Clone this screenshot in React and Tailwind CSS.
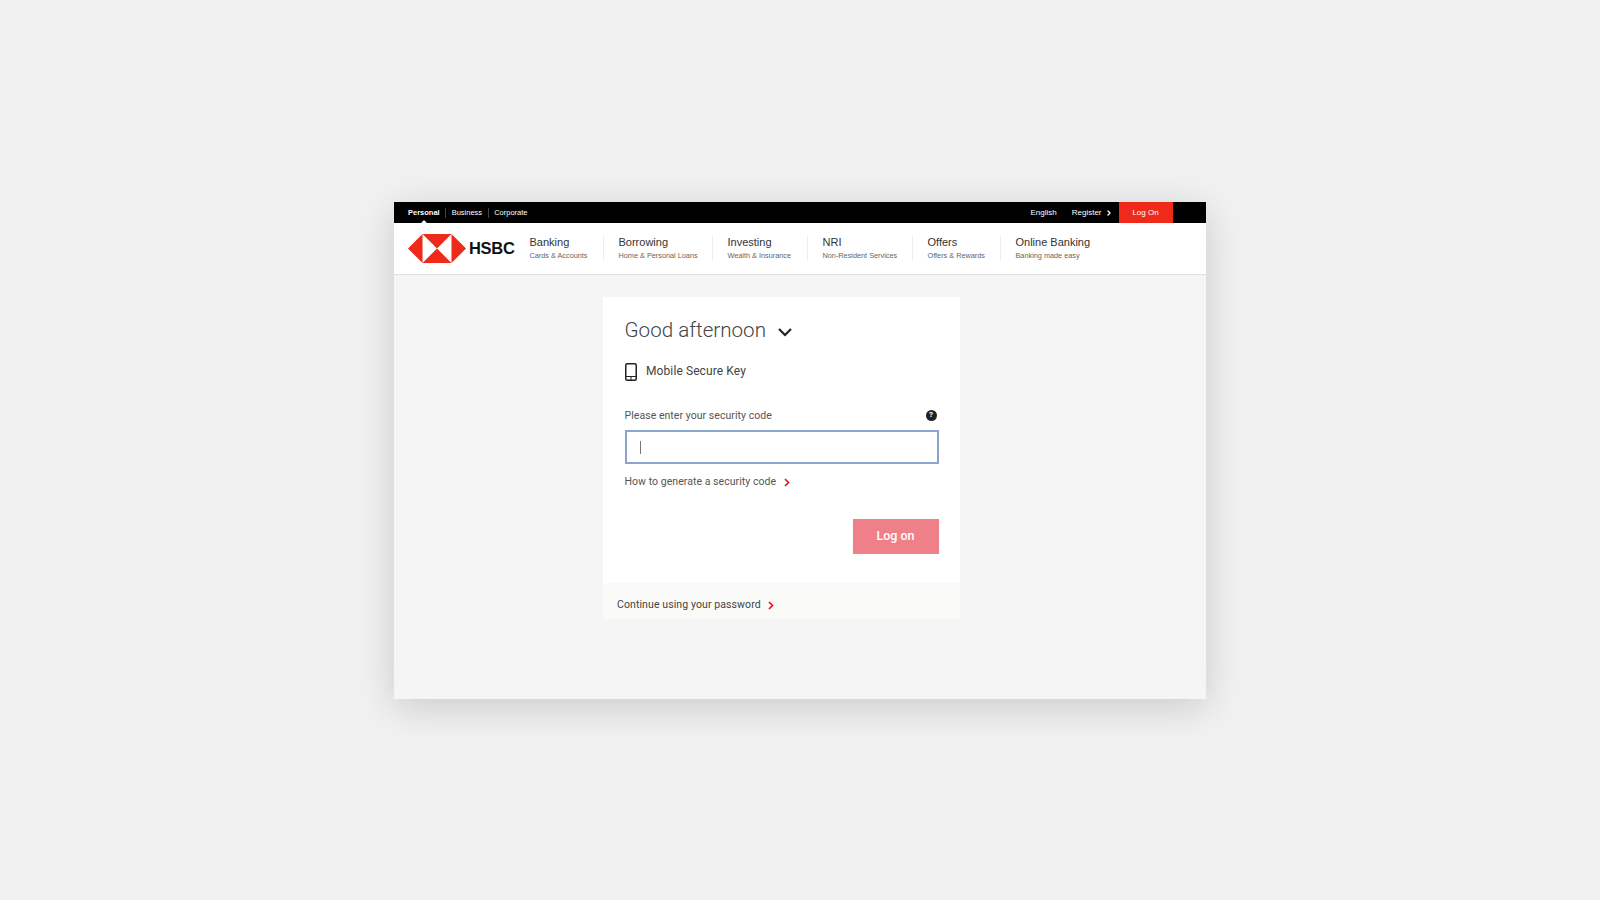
import React from "react";
import { ChevronRight } from "lucide-react";

const navItems = [
  { title: "Banking", sub: "Cards & Accounts", width: "w-[73px]" },
  { title: "Borrowing", sub: "Home & Personal Loans", width: "w-[109px]" },
  { title: "Investing", sub: "Wealth & Insurance", width: "w-[95px]" },
  { title: "NRI", sub: "Non-Resident Services", width: "w-[105px]" },
  { title: "Offers", sub: "Offers & Rewards", width: "w-[88px]" },
  { title: "Online Banking", sub: "Banking made easy", width: "w-[120px]" },
];

function Logo() {
  return (
    <svg width="58" height="29" viewBox="0 0 58 29" className="shrink-0">
      <polygon points="14.5,0 43.5,0 43.5,29 14.5,29" fill="#fff" />
      <polygon points="0,14.5 14.5,0 14.5,29" fill="#ee2a1b" />
      <polygon points="58,14.5 43.5,0 43.5,29" fill="#ee2a1b" />
      <polygon points="14.5,0 43.5,0 29,14.5" fill="#ee2a1b" />
      <polygon points="14.5,29 43.5,29 29,14.5" fill="#ee2a1b" />
    </svg>
  );
}

function RedChevron() {
  return (
    <svg width="6" height="9" viewBox="0 0 6 9" className="shrink-0">
      <path d="M1 1l3.5 3.5L1 8" fill="none" stroke="#e5161d" strokeWidth="1.7" />
    </svg>
  );
}

export default function App() {
  return (
    <div className="min-h-[900px] bg-[#f1f1f1] pt-[202px] font-['Liberation_Sans',sans-serif]">
      <div className="mx-auto w-[812px] h-[497px] bg-[#f5f5f5] shadow-[0_8px_36px_rgba(0,0,0,0.16)]">
        {/* Top bar */}
        <div className="relative flex items-center h-[21px] bg-black pl-[14px] pr-[33.5px] text-[7.5px] text-white">
          <span className="font-bold">Personal</span>
          <span className="w-px h-[10px] bg-[#444] mx-[5.5px]" />
          <span>Business</span>
          <span className="w-px h-[10px] bg-[#444] mx-[5.5px]" />
          <span>Corporate</span>
          <span className="absolute left-[27px] bottom-0 border-x-[3px] border-b-[3px] border-x-transparent border-b-white" />
          <div className="ml-auto flex items-center h-full text-[8px]">
            <span>English</span>
            <span className="ml-[15px]">Register</span>
            <ChevronRight size={8} strokeWidth={4} className="ml-[3px]" />
            <span className="ml-[6px] flex items-center justify-center w-[54px] h-full bg-[#ee2a1b]">
              Log On
            </span>
          </div>
        </div>

        {/* Main nav */}
        <div className="flex items-center h-[52px] bg-white border-b border-[#e2e2e2] pl-[14px]">
          <Logo />
          <span className="ml-[3px] w-[60.5px] text-[16.5px] font-bold tracking-[-0.3px] text-[#111]">HSBC</span>
          <div className="flex items-center">
            {navItems.map((item, i) => (
              <div
                key={item.title}
                className={`${item.width} h-[25px] ${i > 0 ? "border-l border-[#eee] pl-[15px]" : ""}`}
              >
                <div className="text-[11px] leading-[12px] text-[#333]">{item.title}</div>
                <div className="mt-[3px] text-[7.3px] leading-[10px] text-[#666]">{item.sub}</div>
              </div>
            ))}
          </div>
        </div>

        {/* Login card */}
        <div className="ml-[209px] mt-[22px] w-[357px] bg-white font-['Roboto',sans-serif]">
          <div className="pl-[21.5px] pr-[21.5px] pt-[19px] h-[286px]">
            <div className="flex items-center h-[28px]">
              <span className="text-[20.6px] font-light text-[#444]">Good afternoon</span>
              <svg width="16" height="10" viewBox="0 0 16 10" className="ml-[11px] mt-[3px]">
                <path d="M2 2l6 6 6-6" fill="none" stroke="#222" strokeWidth="2.2" />
              </svg>
            </div>
            <div className="flex items-center mt-[19px] h-[18px]">
              <svg width="12" height="18" viewBox="0 0 12 18">
                <rect x="0.75" y="0.75" width="10.5" height="16.5" rx="1.5" fill="none" stroke="#222" strokeWidth="1.5" />
                <path d="M1 13.5h10M6 14v3" stroke="#222" strokeWidth="1" />
              </svg>
              <span className="ml-[9.5px] text-[12px] tracking-[0.1px] text-[#444] -mt-[2px]">Mobile Secure Key</span>
            </div>
            <div className="flex items-center justify-between mt-[27px] h-[16px] pr-[2px]">
              <span className="text-[10.5px] tracking-[0.05px] text-[#555]">Please enter your security code</span>
              <span className="-mt-[2px] flex items-center justify-center w-[11px] h-[11px] rounded-full bg-[#222] text-[8px] font-bold text-white">
                ?
              </span>
            </div>
            <div className="flex items-center mt-[6px] w-[314px] h-[34px] border-2 border-[#8aa6cc] pl-[13px]">
              <span className="w-px h-[13px] bg-[#777]" />
            </div>
            <div className="flex items-center mt-[11px] h-[14px]">
              <span className="text-[10.5px] tracking-[0.05px] text-[#555]">How to generate a security code</span>
              <span className="ml-[8px]"><RedChevron /></span>
            </div>
            <div className="flex justify-end mt-[30px]">
              <button className="w-[86px] h-[35px] bg-[#ef7f89] text-[12.5px] font-medium text-white">Log on</button>
            </div>
          </div>
          <div className="flex items-center h-[36px] bg-[#fafaf9] pl-[14px] pt-[8px]">
            <span className="text-[10.5px] tracking-[0.1px] text-[#444]">Continue using your password</span>
            <span className="ml-[7px]"><RedChevron /></span>
          </div>
        </div>
      </div>
    </div>
  );
}
